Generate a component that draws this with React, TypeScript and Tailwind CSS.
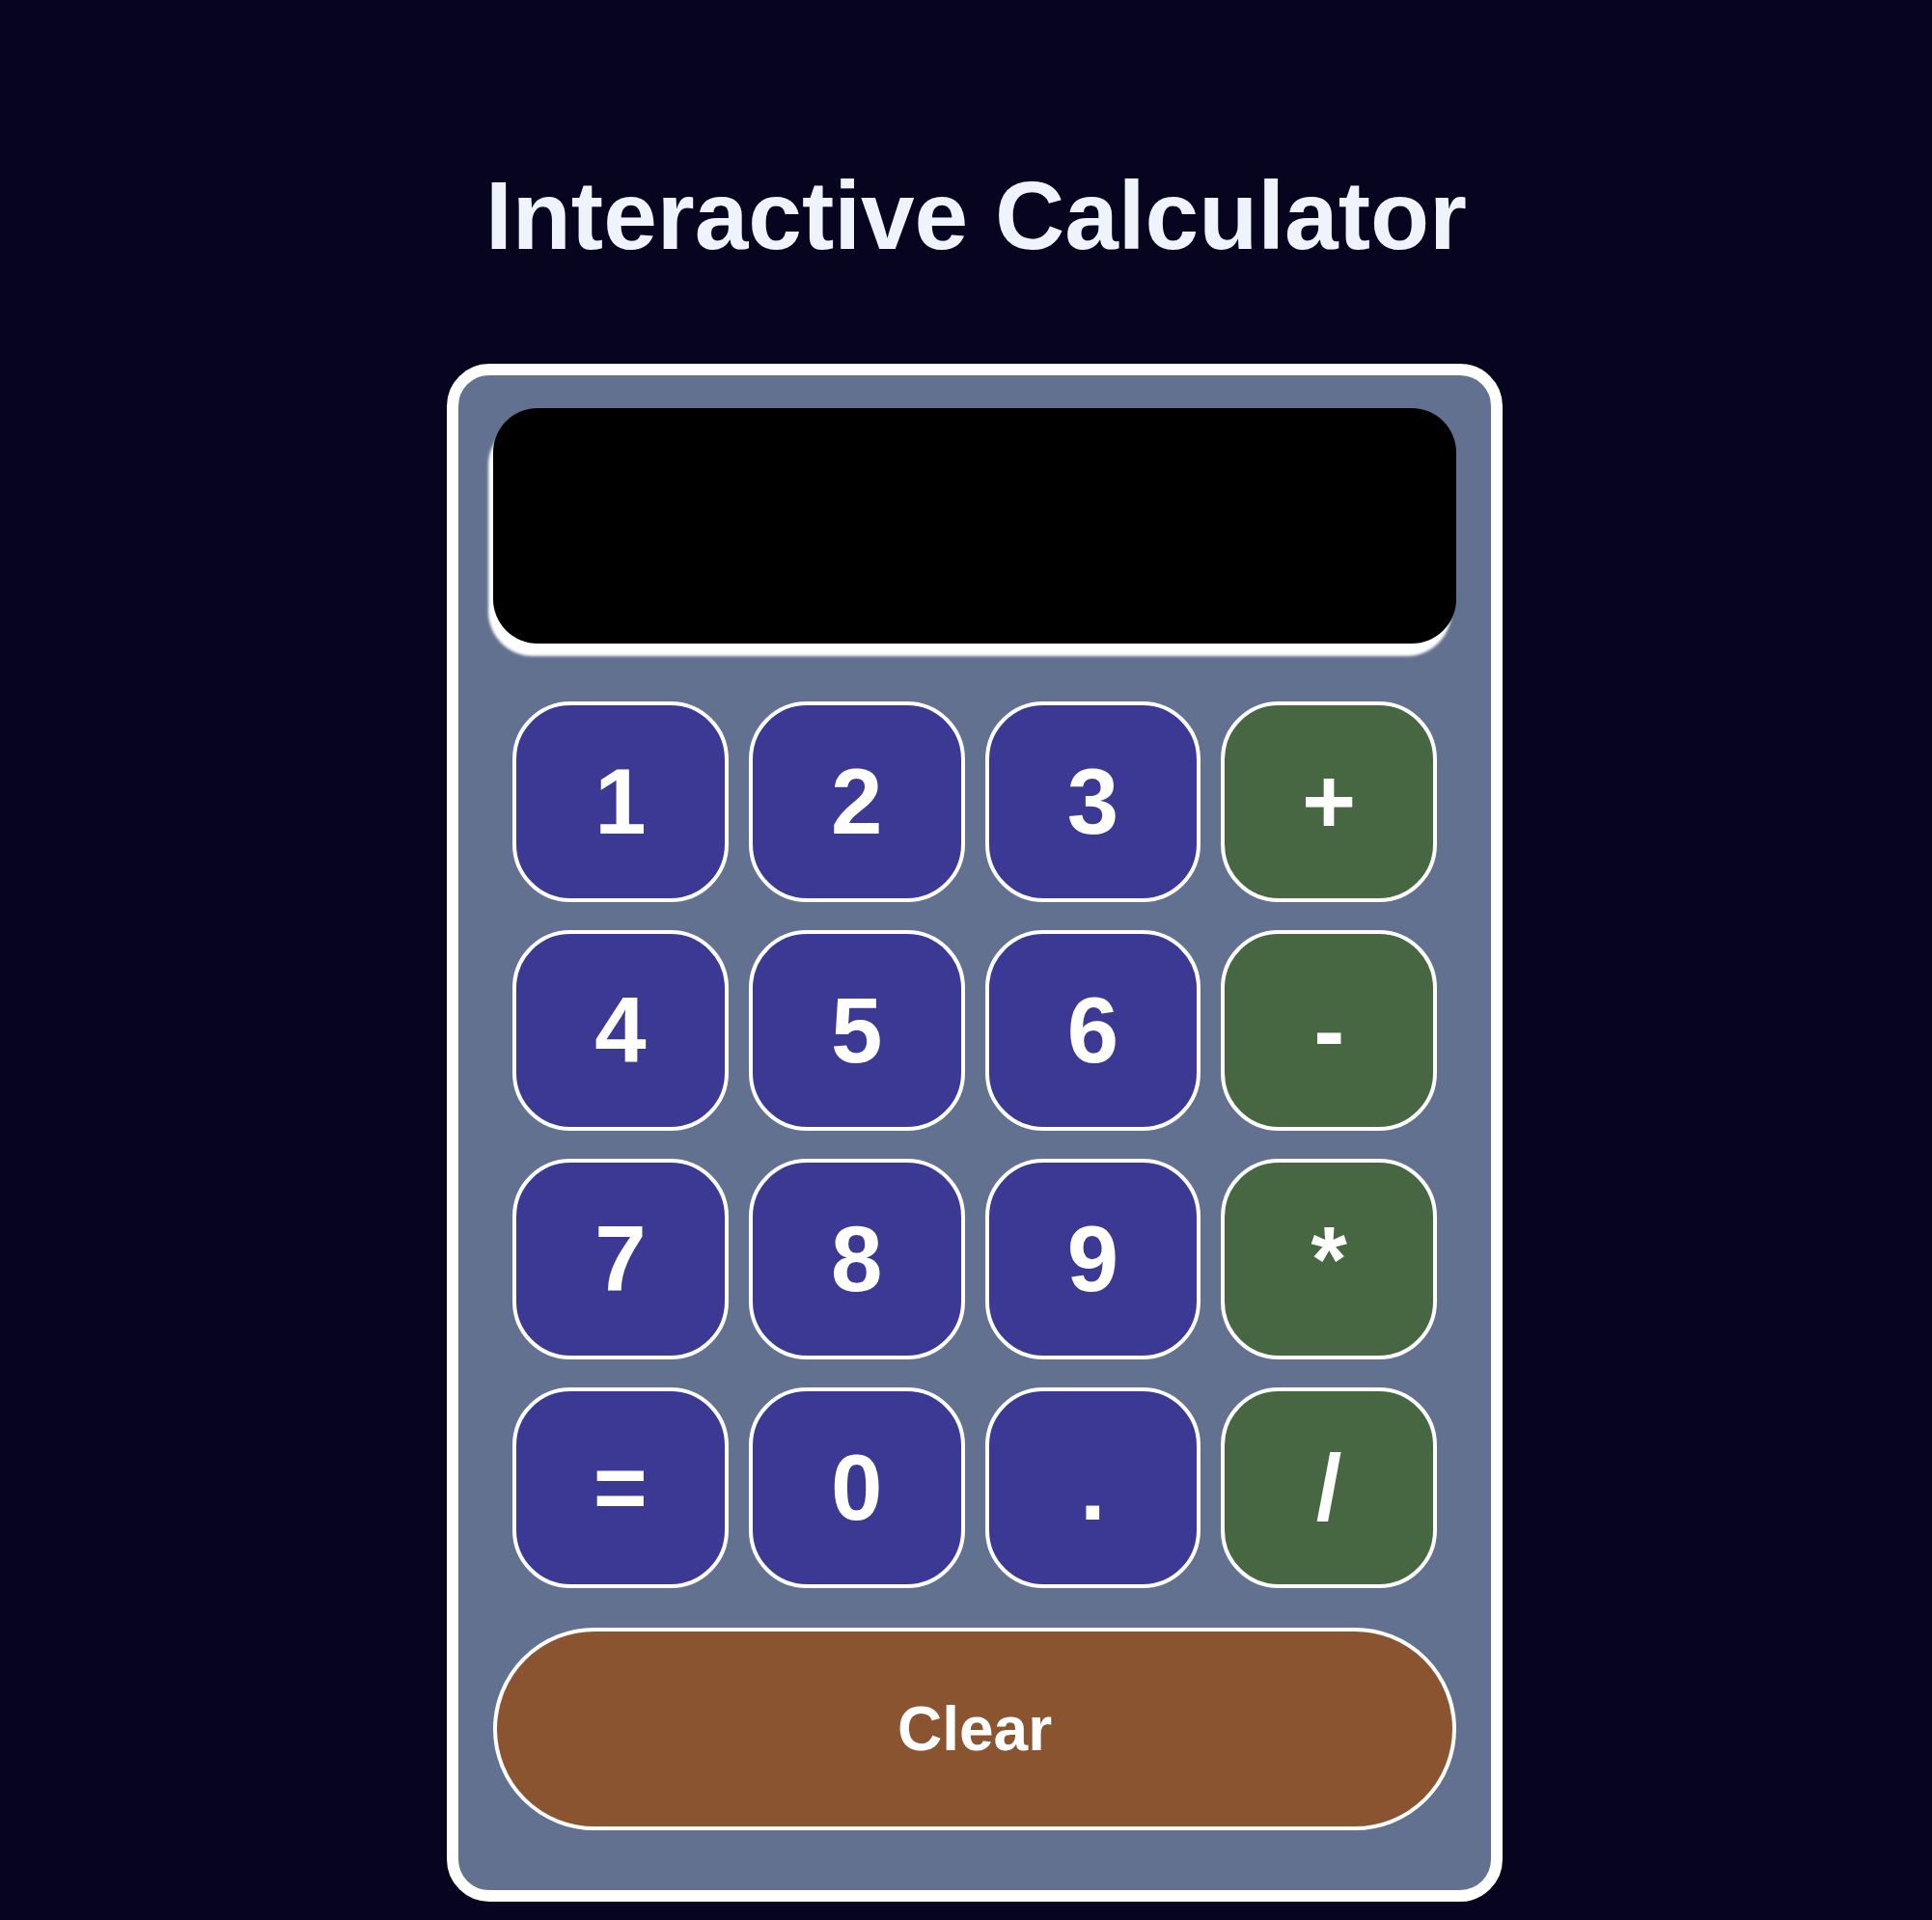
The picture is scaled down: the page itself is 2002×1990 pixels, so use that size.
const keys = [
	{ label: "1", op: false },
	{ label: "2", op: false },
	{ label: "3", op: false },
	{ label: "+", op: true },
	{ label: "4", op: false },
	{ label: "5", op: false },
	{ label: "6", op: false },
	{ label: "-", op: true },
	{ label: "7", op: false },
	{ label: "8", op: false },
	{ label: "9", op: false },
	{ label: "*", op: true },
	{ label: "=", op: false },
	{ label: "0", op: false },
	{ label: ".", op: false },
	{ label: "/", op: true },
];

export default function App() {
	return (
		<div className="min-h-screen bg-[#07041f] pl-[18px] pt-[166px] pb-[19px] flex flex-col items-center font-['Liberation_Sans',Arial,sans-serif]">
			<h1 className="ml-[3px] text-[100px] leading-[115px] font-bold text-[#eff4fc]">
				Interactive Calculator
			</h1>

			<div className="mt-[96px] w-[1094px] border-[12px] border-white rounded-[44px] bg-[#627190] px-[36px] pt-[34px] pb-[62px] flex flex-col">
				<div className="h-[244px] rounded-[46px] bg-black shadow-[-5px_13px_3px_#ffffff]" />

				<div className="mt-[60px] mx-[20px] grid grid-cols-4 gap-x-[21px] gap-y-[29px]">
					{keys.map((k) => (
						<button
							key={k.label}
							className={`h-[208px] rounded-[60px] border-[4px] border-white flex items-center justify-center text-[96px] leading-none font-bold text-white ${
								k.op ? "bg-[#466741]" : "bg-[#3c3995]"
							}`}
						>
							{k.label}
						</button>
					))}
				</div>

				<button className="mt-[41px] h-[210px] rounded-full border-[4px] border-white bg-[#8b5430] text-[64px] leading-none font-bold text-white">
					Clear
				</button>
			</div>
		</div>
	);
}
